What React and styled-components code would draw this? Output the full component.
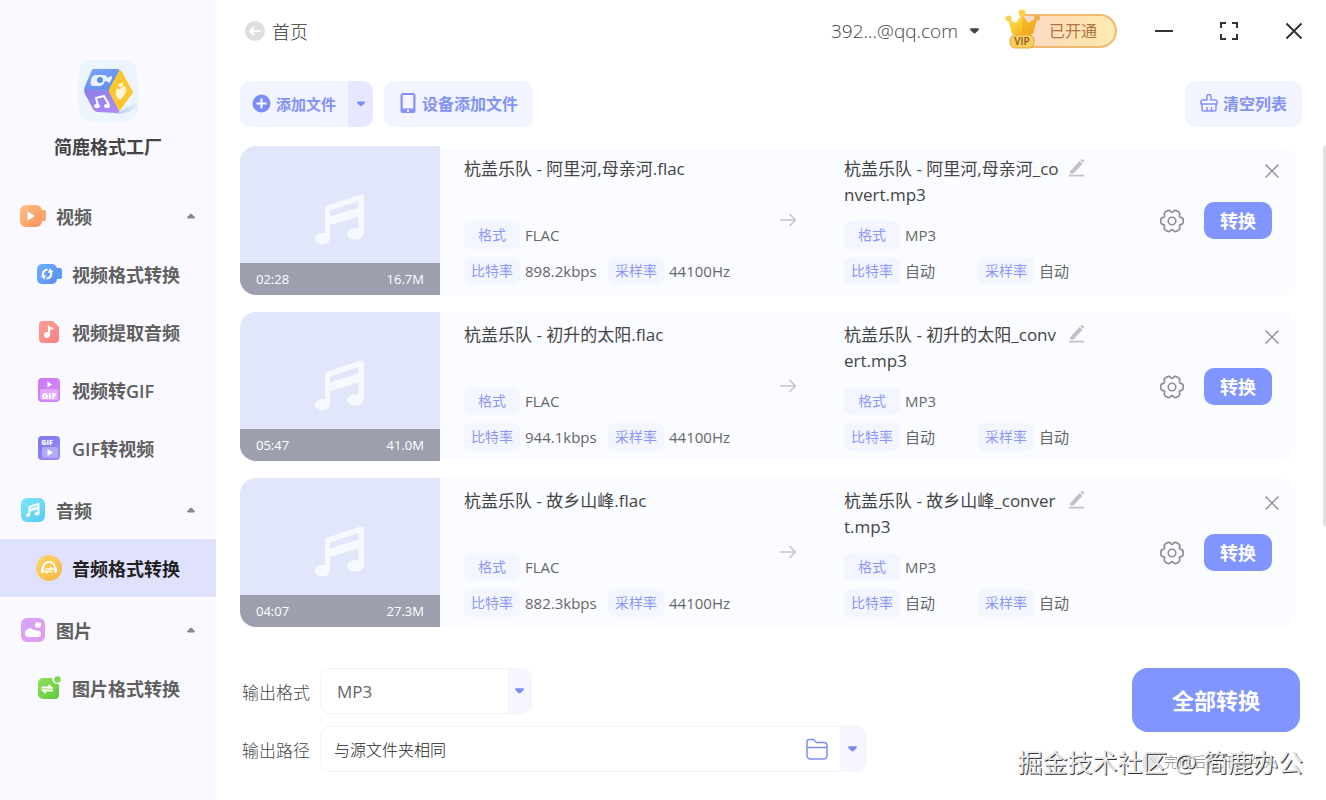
import { useState } from 'react';
import styled, { createGlobalStyle } from 'styled-components';

const GlobalStyle = createGlobalStyle`
  * {
    box-sizing: border-box;
  }

  body {
    margin: 0;
    background: #fff;
    color: #333;
    font-family: 'Open Sans', 'Noto Sans CJK SC', sans-serif;
  }

  button,
  input,
  select {
    margin: 0;
    padding: 0;
    border: 0;
    background: none;
    color: inherit;
    font: inherit;
  }

  button {
    cursor: pointer;
  }

  svg {
    display: block;
    flex: none;
  }
`;

const Page = styled.div`
  display: flex;
  min-height: 100vh;
`;

/* Sidebar */

const Sidebar = styled.aside`
  flex: none;
  width: 216px;
  background: #f9f9ff;
`;

const Brand = styled.div`
  display: flex;
  flex-direction: column;
  align-items: center;
  gap: 12px;
  height: 183px;
  padding-top: 60px;
`;

const BrandName = styled.h1`
  margin: 0;
  color: #444;
  font-size: 18px;
  font-weight: 600;
  line-height: 26px;
`;

const GroupHeader = styled.button`
  display: flex;
  align-items: center;
  gap: 10px;
  width: 100%;
  height: 62px;
  padding: 4px 20px 0;
  color: #606060;
  font-size: 18px;
  font-weight: 600;
  text-align: left;
`;

const GroupTitle = styled.span`
  flex: 1;
`;

const MenuItem = styled.a`
  display: flex;
  align-items: center;
  gap: 10px;
  height: 58px;
  padding-left: 36px;
  background: ${({ $active }) => ($active ? '#e0e1ff' : 'transparent')};
  color: ${({ $active }) => ($active ? '#222' : '#606060')};
  font-size: 18px;
  font-weight: 600;
  text-decoration: none;
`;

/* Main area */

const Main = styled.main`
  flex: 1;
  min-width: 0;
  padding-left: 24px;
`;

const Header = styled.header`
  display: flex;
  align-items: center;
  height: 62px;
  padding-right: 20px;
`;

const BackLink = styled.a`
  display: flex;
  align-items: center;
  gap: 7px;
  margin-right: auto;
  padding-left: 5px;
  color: #333;
  font-size: 18px;
  font-weight: 300;
  text-decoration: none;
`;

const Account = styled.button`
  display: flex;
  align-items: center;
  gap: 12px;
  color: #444;
  font-size: 19px;
  font-weight: 300;
`;

const VipButton = styled.button`
  display: flex;
  align-items: center;
  margin: 0 35px 0 26px;
`;

const VipLabel = styled.span`
  height: 34px;
  margin-left: -20px;
  padding: 0 18px 0 28px;
  border: 2px solid #f2b873;
  border-left: 0;
  border-radius: 4px 17px 17px 4px;
  background: linear-gradient(90deg, #fcd9cd, #fde0b4 50%, #feeab0);
  color: #ae7546;
  font-size: 16px;
  line-height: 30px;
`;

const CrownIcon = styled.svg`
  position: relative;
  margin-bottom: 4px;
`;

const WindowButtons = styled.div`
  display: flex;
  gap: 41px;
`;

const IconButton = styled.button`
  display: flex;
  align-items: center;
  justify-content: center;
  width: ${({ $size = 24 }) => $size}px;
  height: ${({ $size = 24 }) => $size}px;
  color: ${({ $color = '#333' }) => $color};
`;

const Toolbar = styled.div`
  display: flex;
  gap: 11px;
  padding: 19px 24px 19px 0;
`;

const SoftButton = styled.button`
  display: flex;
  align-items: center;
  gap: 5px;
  height: 46px;
  padding: 0 15px 2px;
  border-radius: 10px;
  background: #f2f4ff;
  color: #8392f8;
  font-size: 16px;
  font-weight: 600;
`;

const SplitButton = styled.div`
  display: flex;
  overflow: hidden;
  border-radius: 10px;
`;

const SplitMain = styled(SoftButton)`
  padding: 0 12px 2px;
  border-radius: 0;
  font-size: 15px;
`;

const SplitToggle = styled(IconButton)`
  height: 46px;
  background: #e7e8ff;
  color: #7c8dfb;
`;

const Spacer = styled.div`
  flex: 1;
`;

/* File list */

const ListArea = styled.div`
  display: flex;
  align-items: flex-start;
  gap: 27px;
`;

const FileList = styled.ul`
  display: flex;
  flex: 1;
  flex-direction: column;
  gap: 17px;
  min-width: 0;
  margin: 0;
  padding: 0;
  list-style: none;
`;

const ScrollThumb = styled.div`
  width: 3px;
  height: 380px;
  background: #e2e2e5;
`;

const FileRow = styled.li`
  display: flex;
  height: 149px;
  border-radius: 16px;
  background: #fafcff;
`;

const Thumbnail = styled.div`
  display: flex;
  flex: none;
  flex-direction: column;
  justify-content: space-between;
  width: 200px;
  overflow: hidden;
  border-radius: 16px 0 0 16px;
  background: #e1e6fb;
`;

const ThumbnailArt = styled.div`
  display: flex;
  justify-content: center;
  padding-top: 48px;
`;

const ThumbnailBar = styled.div`
  display: flex;
  justify-content: space-between;
  padding: 0 16px;
  background: #9d9fae;
  color: #fff;
  font-size: 13px;
  line-height: 32px;
`;

const Details = styled.div`
  flex: ${({ $width }) => ($width ? 'none' : 1)};
  width: ${({ $width }) => ($width ? `${$width}px` : 'auto')};
  padding-top: 10px;
`;

const NameLine = styled.div`
  display: flex;
  align-items: flex-start;
  gap: 4px;
  height: 52px;
  margin-bottom: 13px;
`;

const FileName = styled.div`
  width: ${({ $width }) => ($width ? `${$width}px` : 'auto')};
  color: #444;
  font-size: 17px;
  line-height: 26px;
  word-break: break-all;
`;

const RenameButton = styled(IconButton)`
  height: 24px;
`;

const Specs = styled.dl`
  display: grid;
  grid-template-columns: ${({ $column }) => $column}px auto;
  justify-content: start;
  gap: 8px 0;
  margin: 0;
`;

const Spec = styled.div`
  display: flex;
  grid-column: ${({ $first }) => ($first ? '1 / -1' : 'auto')};
  gap: 5px;
  line-height: 28px;
  white-space: nowrap;
`;

const SpecLabel = styled.dt`
  width: 56px;
  border-radius: 6px;
  background: #f4f6ff;
  color: #8c97fa;
  font-size: 14px;
  text-align: center;
`;

const SpecValue = styled.dd`
  margin: 0;
  color: #666;
  font-size: 15px;
`;

const SourceDetails = styled(Details)`
  padding-left: 24px;
`;

const ArrowSlot = styled.div`
  padding: 66px 48px 0 24px;
`;

const Actions = styled.div`
  display: flex;
  flex-direction: column;
  align-items: flex-end;
  gap: 23px;
  margin-left: 72px;
  padding: 17px 16px 0 0;
`;

const ActionTools = styled.div`
  display: flex;
  align-items: center;
  gap: 20px;
  padding-right: 8px;
`;

const PrimaryButton = styled.button`
  width: ${({ $large }) => ($large ? 168 : 68)}px;
  height: ${({ $large }) => ($large ? 64 : 37)}px;
  padding-bottom: 2px;
  border-radius: ${({ $large }) => ($large ? 16 : 10)}px;
  background: #8095ff;
  color: #fff;
  font-size: ${({ $large }) => ($large ? 22 : 18)}px;
  font-weight: 700;
`;

/* Output settings */

const Footer = styled.footer`
  display: flex;
  justify-content: space-between;
  padding: 41px 26px 24px 0;
`;

const Settings = styled.div`
  display: flex;
  flex-direction: column;
  gap: 12px;
`;

const Field = styled.div`
  display: flex;
  align-items: center;
`;

const FieldLabel = styled.label`
  width: 80px;
  padding-left: 2px;
  color: #444;
  font-size: 17px;
  font-weight: 300;
`;

const FieldBox = styled.div`
  display: flex;
  align-items: center;
  width: ${({ $width }) => $width}px;
  height: 46px;
  overflow: hidden;
  border: 1px solid #f2f2fa;
  border-radius: 10px;
`;

const FormatBox = styled(FieldBox)`
  display: grid;
  grid-template-columns: 1fr 23px;
`;

const FormatSelect = styled.select`
  grid-area: 1 / 1 / 2 / 3;
  z-index: 1;
  height: 44px;
  padding-left: 16px;
  appearance: none;
  color: #666;
  font-size: 17px;
`;

const FormatArrow = styled.span`
  display: flex;
  grid-area: 1 / 2;
  align-items: center;
  justify-content: center;
  height: 44px;
  background: #f6f6ff;
  color: #7c8dfb;
`;

const PathInput = styled.input`
  flex: 1;
  min-width: 0;
  height: 44px;
  padding-left: 13px;
  color: #222;
  font-size: 16px;
  font-weight: 300;
`;

const PathToggle = styled(IconButton)`
  height: 44px;
  margin-left: 11px;
  background: #f6f6ff;
`;

const Submit = styled.div`
  display: flex;
  flex-direction: column;
  align-items: flex-end;
  gap: 20px;
`;

const OpenFolder = styled.label`
  display: flex;
  align-items: center;
  gap: 5px;
  padding-right: 24px;
  color: #888;
  font-size: 14px;
  font-weight: 300;
  line-height: 20px;
`;

const OpenFolderCheck = styled.input`
  width: 16px;
  height: 16px;
  appearance: none;
  border-radius: 4px;
  background: #e6e6ea;
`;

const Watermark = styled.div`
  position: absolute;
  right: 23px;
  bottom: 20px;
  z-index: 2;
  color: #e9e9e9;
  font-size: 25px;
  line-height: 36px;
  text-shadow: 1px 1px 0 #333;
  pointer-events: none;
`;

function Caret({ up, width = 10 }) {
  return (
    <svg width={width} height="6" viewBox="0 0 10 6" fill="currentColor" aria-hidden="true">
      <path
        d="M1.6 0h6.800C10 0 10.300 1.200 9.400 2.100L6.200 5.300c-.7.700-1.700.700-2.400 0L.6 2.100C-.3 1.200 0 0 1.600 0z"
        transform={up ? 'rotate(180 5 3)' : undefined}
      />
    </svg>
  );
}

function NotePath({ fill = '#fff' }) {
  return (
    <path
      fill={fill}
      fillRule="evenodd"
      d="M49 2.500C49 .8 47.500 0 45.800.6L12.500 11.500C11 12 10 13 10 14.600V39.200C5 38.500 0 40.500 0 44.500C0 48 3.500 50.500 7.500 50.500C12.500 50.500 15 47 15 43V31L43.500 22.500V34.500C38 33.500 32.500 35.500 32.500 40C32.500 43.500 35.500 45.600 40 45.600C45.500 45.600 49 42.500 49 38ZM15 16.500L43.500 7V13.500L15 22.500Z"
    />
  );
}

function Logo() {
  return (
    <svg width="60" height="62" viewBox="0 0 60 62" role="img" aria-label="简鹿格式工厂">
      <defs>
        <linearGradient id="logoTop" x1="0" y1="0" x2="1" y2="1">
          <stop offset="0" stopColor="#7fa3f8" />
          <stop offset="1" stopColor="#5b8cf0" />
        </linearGradient>
        <linearGradient id="logoLeft" x1="0" y1="0" x2="1" y2="1">
          <stop offset="0" stopColor="#8c7ce8" />
          <stop offset="1" stopColor="#b08cfa" />
        </linearGradient>
        <linearGradient id="logoShade" x1="0" y1="0" x2="1" y2="0">
          <stop offset="0" stopColor="#b3c9ef" />
          <stop offset="1" stopColor="#e3eefc" />
        </linearGradient>
      </defs>
      <rect width="60" height="62" rx="15" fill="#ecf4fe" />
      <path d="M38 54l21-12v5c-5 4-12 7-21 7z" fill="url(#logoShade)" />
      <path d="M15 9h24c2 0 3 1 2 3L31 31 7 30c-1 0-1-2 0-4l6-14c1-2 1-3 2-3z" fill="url(#logoTop)" />
      <path d="M7 29l24 2 10 19c1 2 0 3-2 3l-19-1c-2 0-4-1-5-3L7 34c-1-2-1-4 0-5z" fill="url(#logoLeft)" />
      <path d="M41 11c1-1 2-1 3 1l10 18c1 1 1 3 0 4L43 49c-1 2-2 2-3 0l-9-17v-3z" fill="#fcc62e" />
      <path
        d="M18 15h8c2 0 3 1 3 3l4-2c1 0 1 1 1 2l-2 4c0 1-1 1-2 0l-3-1c-1 3-3 5-6 5h-5c-3 0-4-2-3-5 0-3 2-6 5-6z"
        fill="#e8f3ff"
      />
      <circle cx="22" cy="20" r="3" fill="#5b8cf0" />
      <path d="M20 46l-2-8 8-2 5 9" fill="none" stroke="#fff" strokeWidth="2" strokeLinejoin="round" />
      <ellipse cx="19" cy="46" rx="3" ry="2" fill="#fff" />
      <ellipse cx="29" cy="46" rx="3" ry="2" fill="#fff" />
      <path d="M38 31c1-3 2-3 4-1 1-4 5-5 6-2 1 4-3 9-6 12-3-2-5-6-4-9z" fill="#fff6db" />
      <path d="M40 25l5-2-2 4z" fill="#fff6db" stroke="#fff6db" strokeLinejoin="round" />
    </svg>
  );
}

// Six rounded teeth, smoothed by running curves through the segment middles
function gearPath() {
  const points = [];
  for (let tooth = 0; tooth < 6; tooth += 1) {
    [[-17, 11.8], [17, 11.8], [30, 7.6]].forEach(([offset, radius]) => {
      const angle = ((tooth * 60 + offset) * Math.PI) / 180;
      points.push([12 + radius * Math.cos(angle), 12 + radius * Math.sin(angle)]);
    });
  }
  const middle = (a, b) => `${((a[0] + b[0]) / 2).toFixed(2)} ${((a[1] + b[1]) / 2).toFixed(2)}`;
  const curves = points.map((point, i) => {
    const next = points[(i + 1) % points.length];
    return `Q${point[0].toFixed(2)} ${point[1].toFixed(2)} ${middle(point, next)}`;
  });
  return `M${middle(points[points.length - 1], points[0])}${curves.join('')}Z`;
}

const gear = gearPath();

// 26x26 drawings shown in front of every sidebar entry
const menuIcons = {
  video: (
    <>
      <rect x="18" y="7" width="8" height="11" rx="2" fill="#f7a868" />
      <rect x="0" y="2" width="22" height="22" rx="6" fill="url(#orange)" />
      <path d="M8 9l6 4-6 4z" fill="#fff" stroke="#fff" strokeLinejoin="round" />
    </>
  ),
  videoConvert: (
    <>
      <rect x="18" y="7" width="8" height="11" rx="2" fill="#5a9bf0" />
      <rect x="1" y="3" width="20" height="20" rx="5" fill="url(#blue)" />
      <path
        d="M7.500 16C5.500 12 8 8.500 11.500 8.500M14.500 10C16.500 14 14 17.500 10.500 17.500"
        fill="none"
        stroke="#fff"
        strokeWidth="2.200"
      />
      <path d="M4.500 15l5.500-1-1.500 4.500zM17.500 11L12 12l1.500-4.500z" fill="#fff" />
    </>
  ),
  extract: (
    <>
      <path d="M7 2h10l6 6v12a4 4 0 0 1-4 4H7a4 4 0 0 1-4-4V6a4 4 0 0 1 4-4z" fill="url(#red)" />
      <circle cx="11" cy="16" r="3" fill="#fff" />
      <path d="M13 16V8.500c1 1 2 1 3.500 1" fill="none" stroke="#fff" strokeWidth="2.200" strokeLinecap="round" />
    </>
  ),
  videoGif: (
    <>
      <rect x="2" y="1" width="22" height="24" rx="4" fill="url(#purple)" />
      <rect x="4" y="12" width="18" height="11" rx="2" fill="#e3a7f8" />
      <path d="M11.500 4.500l4.500 3-4.500 3z" fill="#fff" />
      <text x="13" y="21.500" fill="#fff" fontSize="9" fontWeight="800" textAnchor="middle">GIF</text>
    </>
  ),
  gifVideo: (
    <>
      <rect x="2" y="1" width="22" height="24" rx="4" fill="url(#indigo)" />
      <rect x="6" y="12" width="16" height="11" rx="2" fill="#b3a9fb" />
      <text x="11" y="9.500" fill="#fff" fontSize="7" fontWeight="800" textAnchor="middle">GIF</text>
      <path d="M11.500 14l5.500 3.500-5.500 3.500z" fill="#fff" />
    </>
  ),
  audio: (
    <>
      <rect x="1" y="1" width="24" height="24" rx="6" fill="url(#cyan)" />
      <g transform="translate(6 6) scale(.27)" stroke="#fff" strokeWidth="2">
        <NotePath />
      </g>
    </>
  ),
  audioConvert: (
    <>
      <circle cx="13" cy="13" r="13" fill="url(#gold)" />
      <path d="M7 15v-2a6 6 0 0 1 12 0v2" fill="none" stroke="#fff" strokeWidth="1.800" />
      <rect x="5" y="12" width="3" height="6" rx="1.500" fill="#fff" />
      <rect x="18" y="12" width="3" height="6" rx="1.500" fill="#fff" />
      <path d="M9.500 14h7l-2-2M16.500 16.500h-7l2 2" fill="none" stroke="#fff" strokeWidth="1.500" />
    </>
  ),
  image: (
    <>
      <rect x="1" y="1" width="24" height="24" rx="6" fill="url(#pink)" />
      <circle cx="18" cy="8" r="3" fill="#fff" />
      <path d="M8 20a4 4 0 0 1-1-7.500c2-2 5-1.500 6 .5 1.500-.8 3 0 3.500 1 3-.8 5 1 4.500 3s-1.500 3-3 3z" fill="#fff" />
    </>
  ),
  imageConvert: (
    <>
      <path d="M7 3h9a6 6 0 0 0 7 6v11a4 4 0 0 1-4 4H7a5 5 0 0 1-5-5V8a5 5 0 0 1 5-5z" fill="url(#green)" />
      <circle cx="21.500" cy="4.500" r="3.200" fill="#7bd84f" />
      <path d="M5.500 12.500h10M17 15.500H7" stroke="#fff" strokeWidth="2.200" />
      <path d="M12.500 9l5.500 4.500h-5.500zM10 19l-5.500-4.500H10z" fill="#fff" />
    </>
  ),
};

const gradients = [
  ['orange', '#ffc08a', '#f9925a'],
  ['blue', '#6bb0fc', '#5b8df2'],
  ['red', '#fba09a', '#f97f80'],
  ['purple', '#c878f4', '#d68bf9'],
  ['indigo', '#7f78ea', '#9a8cfa'],
  ['cyan', '#7be8fb', '#5cc8f5'],
  ['gold', '#fdd76b', '#f9b53f'],
  ['pink', '#d3a6fb', '#e59bf0'],
  ['green', '#8fe05c', '#62c93e'],
];

function GradientDefs() {
  return (
    <svg width="0" height="0" aria-hidden="true">
      <defs>
        {gradients.map(([id, from, to]) => (
          <linearGradient key={id} id={id} x1="0" y1="0" x2="1" y2="1">
            <stop offset="0" stopColor={from} />
            <stop offset="1" stopColor={to} />
          </linearGradient>
        ))}
      </defs>
    </svg>
  );
}

function MenuIcon({ name }) {
  return (
    <svg width="26" height="26" viewBox="0 0 26 26" aria-hidden="true">
      {menuIcons[name]}
    </svg>
  );
}

const menu = [
  {
    title: '视频',
    icon: 'video',
    items: [
      { title: '视频格式转换', icon: 'videoConvert' },
      { title: '视频提取音频', icon: 'extract' },
      { title: '视频转GIF', icon: 'videoGif' },
      { title: 'GIF转视频', icon: 'gifVideo' },
    ],
  },
  {
    title: '音频',
    icon: 'audio',
    items: [{ title: '音频格式转换', icon: 'audioConvert' }],
  },
  {
    title: '图片',
    icon: 'image',
    items: [{ title: '图片格式转换', icon: 'imageConvert' }],
  },
];

const files = [
  { name: '杭盖乐队 - 阿里河,母亲河', time: '02:28', size: '16.7M', bitrate: '898.2kbps' },
  { name: '杭盖乐队 - 初升的太阳', time: '05:47', size: '41.0M', bitrate: '944.1kbps' },
  { name: '杭盖乐队 - 故乡山峰', time: '04:07', size: '27.3M', bitrate: '882.3kbps' },
];

function MenuGroup({ group, current, onSelect }) {
  const [open, setOpen] = useState(true);

  return (
    <div>
      <GroupHeader type="button" aria-expanded={open} onClick={() => setOpen(!open)}>
        <MenuIcon name={group.icon} />
        <GroupTitle>{group.title}</GroupTitle>
        <IconButton as="span" $size={10} $color="#888">
          <Caret up={open} width={8} />
        </IconButton>
      </GroupHeader>
      {open &&
        group.items.map((item) => (
          <MenuItem
            key={item.title}
            href="#"
            $active={item.title === current}
            onClick={() => onSelect(item.title)}
          >
            <MenuIcon name={item.icon} />
            {item.title}
          </MenuItem>
        ))}
    </div>
  );
}

function SpecList({ column, format, bitrate, sampleRate }) {
  return (
    <Specs $column={column}>
      <Spec $first>
        <SpecLabel>格式</SpecLabel>
        <SpecValue>{format}</SpecValue>
      </Spec>
      <Spec>
        <SpecLabel>比特率</SpecLabel>
        <SpecValue>{bitrate}</SpecValue>
      </Spec>
      <Spec>
        <SpecLabel>采样率</SpecLabel>
        <SpecValue>{sampleRate}</SpecValue>
      </Spec>
    </Specs>
  );
}

function FileItem({ file }) {
  return (
    <FileRow>
      <Thumbnail>
        <ThumbnailArt>
          <svg width="50" height="52" viewBox="0 0 50 52" aria-hidden="true">
            <NotePath fill="#f6fafe" />
          </svg>
        </ThumbnailArt>
        <ThumbnailBar>
          <span>{file.time}</span>
          <span>{file.size}</span>
        </ThumbnailBar>
      </Thumbnail>
      <SourceDetails>
        <NameLine>
          <FileName>{`${file.name}.flac`}</FileName>
        </NameLine>
        <SpecList column={144} format="FLAC" bitrate={file.bitrate} sampleRate="44100Hz" />
      </SourceDetails>
      <ArrowSlot>
        <svg width="16" height="16" viewBox="0 0 16 16" fill="none" stroke="#c4c4c8" strokeWidth="1.500" aria-hidden="true">
          <path d="M0 8h15M9.500 2l6 6-6 6" />
        </svg>
      </ArrowSlot>
      <Details $width={244}>
        <NameLine>
          <FileName $width={220}>{`${file.name}_convert.mp3`}</FileName>
          <RenameButton type="button" $size={18} $color="#c2c2c4" aria-label="重命名">
            <svg width="16" height="18" viewBox="0 0 16 18" fill="currentColor">
              <path d="M1 12.500L10.500 2l3 2.700L4.500 14.500H1zM11.300 1.200L12.300.2c.3-.3.700-.3 1 0l1.800 1.600c.3.300.3.700 0 1L14.200 3.800zM0 15.800h15V17.500H0z" />
            </svg>
          </RenameButton>
        </NameLine>
        <SpecList column={134} format="MP3" bitrate="自动" sampleRate="自动" />
      </Details>
      <Actions>
        <IconButton type="button" $size={16} $color="#929292" aria-label="移除">
          <svg width="14" height="14" viewBox="0 0 14 14" stroke="currentColor" strokeWidth="1.500">
            <path d="M.5.5l13 13M13.500.5l-13 13" />
          </svg>
        </IconButton>
        <ActionTools>
          <IconButton type="button" $color="#8e8e8e" aria-label="设置">
            <svg width="24" height="24" viewBox="0 0 24 24" fill="none" stroke="currentColor" strokeWidth="1.600">
              <path d={gear} />
              <circle cx="12" cy="12" r="3.800" />
            </svg>
          </IconButton>
          <PrimaryButton type="button">转换</PrimaryButton>
        </ActionTools>
      </Actions>
    </FileRow>
  );
}

function VipBadge() {
  return (
    <VipButton type="button">
      <CrownIcon width="36" height="40" viewBox="0 0 36 40" aria-hidden="true">
        <defs>
          <linearGradient id="crown" x1="0" y1="0" x2="1" y2="1">
            <stop offset="0" stopColor="#ffe36a" />
            <stop offset=".5" stopColor="#fbc52c" />
            <stop offset="1" stopColor="#ee9f1e" />
          </linearGradient>
        </defs>
        <path d="M3 10l8 4 6-9 6 9 9-5-4 16c-6 2-14 2-21 0z" fill="url(#crown)" />
        <path d="M17 5l6 9 9-5-4 16c-4 1.500-7 1.500-11 1.500z" fill="#f0a31e" opacity=".45" />
        <circle cx="3.500" cy="9.500" r="3" fill="#fbd050" />
        <circle cx="17" cy="4" r="3.500" fill="#fcd24a" />
        <circle cx="32" cy="9" r="3" fill="#eeb04a" />
        <rect x="5" y="26" width="24" height="13" rx="5" fill="#f9cf5c" stroke="#e7a546" />
        <text x="17" y="36" fill="#8f5526" fontSize="10" fontWeight="600" textAnchor="middle">VIP</text>
      </CrownIcon>
      <VipLabel>已开通</VipLabel>
    </VipButton>
  );
}

function App() {
  const [current, setCurrent] = useState('音频格式转换');
  const [format, setFormat] = useState('MP3');
  const [path, setPath] = useState('与源文件夹相同');

  return (
    <>
      <GlobalStyle />
      <Page>
        <Sidebar>
          <Brand>
            <Logo />
            <BrandName>简鹿格式工厂</BrandName>
          </Brand>
          <nav>
            {menu.map((group) => (
              <MenuGroup key={group.title} group={group} current={current} onSelect={setCurrent} />
            ))}
          </nav>
          <GradientDefs />
        </Sidebar>
        <Main>
          <Header>
            <BackLink href="#">
              <svg width="20" height="20" viewBox="0 0 20 20" aria-hidden="true">
                <circle cx="10" cy="10" r="10" fill="#dedede" />
                <path d="M15.500 10H5.500M9.500 5.800L5.200 10l4.300 4.200" fill="none" stroke="#fff" strokeWidth="2" />
              </svg>
              首页
            </BackLink>
            <Account type="button">
              392...@qq.com
              <Caret width={9} />
            </Account>
            <VipBadge />
            <WindowButtons>
              <IconButton type="button" aria-label="最小化">
                <svg width="18" height="18" viewBox="0 0 18 18" stroke="currentColor" strokeWidth="2">
                  <path d="M0 9h18" />
                </svg>
              </IconButton>
              <IconButton type="button" aria-label="最大化">
                <svg width="18" height="18" viewBox="0 0 18 18" fill="none" stroke="currentColor" strokeWidth="2">
                  <path d="M1 6V1h5M12 1h5v5M17 12v5h-5M6 17H1v-5" />
                </svg>
              </IconButton>
              <IconButton type="button" aria-label="关闭">
                <svg width="18" height="18" viewBox="0 0 18 18" stroke="currentColor" strokeWidth="2">
                  <path d="M1.500 1.500l15 15M16.500 1.500l-15 15" />
                </svg>
              </IconButton>
            </WindowButtons>
          </Header>

          <Toolbar>
            <SplitButton>
              <SplitMain type="button">
                <svg width="19" height="19" viewBox="0 0 19 19" aria-hidden="true">
                  <circle cx="9.500" cy="9.500" r="9" fill="#7c8dfb" />
                  <path d="M9.500 4.500v10M4.500 9.500h10" stroke="#fff" strokeWidth="2" />
                </svg>
                添加文件
              </SplitMain>
              <SplitToggle type="button" $size={25} aria-label="更多添加方式">
                <Caret width={8} />
              </SplitToggle>
            </SplitButton>
            <SoftButton type="button">
              <svg width="18" height="20" viewBox="0 0 18 20" aria-hidden="true">
                <path
                  fill="currentColor"
                  fillRule="evenodd"
                  d="M4 0h10a2.500 2.500 0 0 1 2.500 2.500v15A2.500 2.500 0 0 1 14 20H4a2.500 2.500 0 0 1-2.500-2.500v-15A2.500 2.500 0 0 1 4 0zm-.3 2v13.500h10.600V2zM9 16.500a1.200 1.200 0 1 0 0 2.400 1.200 1.200 0 0 0 0-2.400z"
                />
              </svg>
              设备添加文件
            </SoftButton>
            <Spacer />
            <SoftButton type="button">
              <svg width="18" height="18" viewBox="0 0 18 18" fill="none" stroke="currentColor" strokeWidth="1.500" strokeLinejoin="round" aria-hidden="true">
                <path d="M7 6V2.500a2 2 0 0 1 4 0V6h4.500a1.500 1.500 0 0 1 1.500 1.500V10H1V7.500A1.500 1.500 0 0 1 2.500 6zM2 10v5.500A1.500 1.500 0 0 0 3.500 17h11a1.500 1.500 0 0 0 1.500-1.500V10M7 17v-4M11.500 17v-4" />
              </svg>
              清空列表
            </SoftButton>
          </Toolbar>

          <ListArea>
            <FileList>
              {files.map((file) => (
                <FileItem key={file.name} file={file} />
              ))}
            </FileList>
            <ScrollThumb />
          </ListArea>

          <Footer>
            <Settings>
              <Field>
                <FieldLabel htmlFor="format">输出格式</FieldLabel>
                <FormatBox $width={212}>
                  <FormatSelect id="format" value={format} onChange={(e) => setFormat(e.target.value)}>
                    <option>MP3</option>
                    <option>WAV</option>
                    <option>FLAC</option>
                  </FormatSelect>
                  <FormatArrow>
                    <Caret width={9} />
                  </FormatArrow>
                </FormatBox>
              </Field>
              <Field>
                <FieldLabel htmlFor="path">输出路径</FieldLabel>
                <FieldBox $width={546}>
                  <PathInput id="path" value={path} onChange={(e) => setPath(e.target.value)} />
                  <IconButton type="button" $color="#7c8dfb" aria-label="选择文件夹">
                    <svg width="22" height="22" viewBox="0 0 22 22" fill="none" stroke="currentColor" strokeWidth="1.500" strokeLinejoin="round">
                      <path d="M1 9V3.500a2 2 0 0 1 2-2h4.500L10.500 4.500H18a3 3 0 0 1 3 3v10a3.500 3.500 0 0 1-3.500 3.500h-13A3.500 3.500 0 0 1 1 17.500zM1 9.500h20" />
                    </svg>
                  </IconButton>
                  <PathToggle type="button" $size={25} $color="#7c8dfb" aria-label="更多路径">
                    <Caret width={9} />
                  </PathToggle>
                </FieldBox>
              </Field>
            </Settings>
            <Submit>
              <PrimaryButton type="button" $large>
                全部转换
              </PrimaryButton>
              <OpenFolder>
                <OpenFolderCheck type="checkbox" />
                完成后打开文件夹
              </OpenFolder>
            </Submit>
          </Footer>
        </Main>
      </Page>
      <Watermark>掘金技术社区 @ 简鹿办公</Watermark>
    </>
  );
}

export default App;
